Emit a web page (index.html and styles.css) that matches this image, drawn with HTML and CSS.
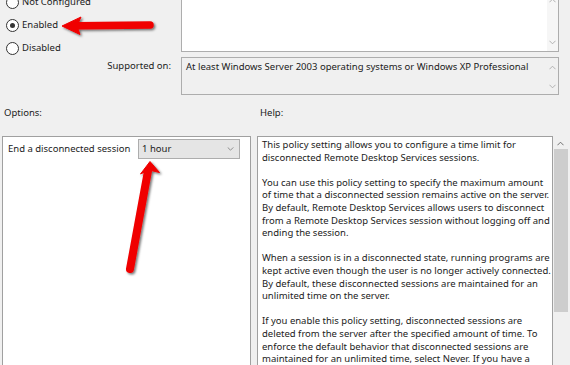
FILE: index.html
```html
<!DOCTYPE html>
<html lang="en">
<head>
    <meta charset="UTF-8">
    <title>End a disconnected session</title>
    <link rel="stylesheet" href="styles.css">
</head>
<body>
    <div class="page">
        <div class="top">
            <div class="states">
                <div class="radio"><span class="radio-dot"></span>Not Configured</div>
                <div class="radio checked"><span class="radio-dot"></span>Enabled</div>
                <div class="radio"><span class="radio-dot"></span>Disabled</div>
            </div>
            <div class="box comment">
                <div class="box-body"></div>
                <div class="box-scroll">
                    <svg class="chev" viewBox="0 0 8 5"><polyline points="0.5,4.5 4,1 7.5,4.5"/></svg>
                    <svg class="chev" viewBox="0 0 8 5"><polyline points="0.5,0.5 4,4 7.5,0.5"/></svg>
                </div>
            </div>
            <div class="field-label">Supported on:</div>
            <div class="box supported">
                <div class="box-body">At least Windows Server 2003 operating systems or Windows XP Professional</div>
                <div class="box-scroll">
                    <svg class="chev" viewBox="0 0 8 5"><polyline points="0.5,4.5 4,1 7.5,4.5"/></svg>
                    <svg class="chev" viewBox="0 0 8 5"><polyline points="0.5,0.5 4,4 7.5,0.5"/></svg>
                </div>
            </div>
        </div>

        <div class="heads">
            <div class="head">Options:</div>
            <div class="head">Help:</div>
        </div>

        <div class="panes">
            <div class="pane options">
                <div class="option-row">
                    <span class="option-label">End a disconnected session</span>
                    <div class="select">
                        <span>1 hour</span>
                        <svg class="select-chev" viewBox="0 0 8 5"><polyline points="0.5,0.5 4,4 7.5,0.5"/></svg>
                    </div>
                </div>
            </div>
            <div class="pane help">
                <p>This policy setting allows you to configure a time limit for<br>disconnected Remote Desktop Services sessions.</p>
                <p>You can use this policy setting to specify the maximum amount<br>of time that a disconnected session remains active on the server.<br>By default, Remote Desktop Services allows users to disconnect<br>from a Remote Desktop Services session without logging off and<br>ending the session.</p>
                <p>When a session is in a disconnected state, running programs are<br>kept active even though the user is no longer actively connected.<br>By default, these disconnected sessions are maintained for an<br>unlimited time on the server.</p>
                <p>If you enable this policy setting, disconnected sessions are<br>deleted from the server after the specified amount of time. To<br>enforce the default behavior that disconnected sessions are<br>maintained for an unlimited time, select Never. If you have a</p>
            </div>
            <div class="scrollbar">
                <svg class="chev dark" viewBox="0 0 8 5"><polyline points="0.5,4.5 4,1 7.5,4.5"/></svg>
                <div class="thumb"></div>
            </div>
        </div>

        <!-- red callout arrows drawn over the dialog -->
        <svg class="annotations" width="570" height="365" viewBox="0 0 570 365">
            <defs>
                <filter id="shade" x="-20%" y="-20%" width="140%" height="140%">
                    <feDropShadow dx="1.5" dy="1.5" stdDeviation="1.2" flood-color="#000" flood-opacity="0.55"/>
                </filter>
            </defs>
            <g filter="url(#shade)" fill="#f00500" stroke="#f00500">
                <line x1="150" y1="25" x2="79" y2="25.8" stroke-width="7.5" stroke-linecap="round"/>
                <polygon points="62,26 81,17 77,26 80,34.5" stroke-width="1" stroke-linejoin="round"/>
                <line x1="148" y1="171" x2="130" y2="269" stroke-width="8" stroke-linecap="round"/>
                <polygon points="150,161.5 159.5,172.5 149,170 140.5,174" stroke-width="1" stroke-linejoin="round"/>
            </g>
        </svg>
    </div>
</body>
</html>
```

FILE: styles.css
```css
html, body {
    margin: 0;
    height: 100%;
    overflow: hidden;
}

body {
    background-color: #f0f0f0;
    color: #1b1b1b;
    font-family: "Noto Sans", "Open Sans", sans-serif;
    font-size: 9.5px;
    line-height: 12.6px;
}

.page {
    position: relative;
    display: flow-root;
    height: 365px;
    overflow: hidden;
}

/* top area: state radios, comment box, supported on */

.top {
    display: grid;
    grid-template-columns: 181px 378px;
    grid-template-rows: 82px 38px;
    row-gap: 5px;
    margin-top: -30px;
}

.states {
    padding: 21px 0 0 6px;
}

.radio {
    display: flex;
    align-items: center;
    gap: 3px;
    height: 23px;
}

.radio-dot {
    width: 11px;
    height: 11px;
    border: 1px solid #333;
    border-radius: 50%;
    background-color: #fff;
    display: flex;
    align-items: center;
    justify-content: center;
}

.radio.checked .radio-dot::after {
    content: "";
    width: 5px;
    height: 5px;
    border-radius: 50%;
    background-color: #333;
}

.box {
    display: flex;
    border: 1px solid #adadad;
    box-sizing: border-box;
}

.box-body {
    flex: 1;
    padding: 3px 4px;
}

.comment {
    background-color: #fff;
}

.supported {
    background-color: #f0f0f0;
}

.box-scroll {
    width: 11px;
    display: flex;
    flex-direction: column;
    justify-content: space-between;
    align-items: center;
    padding: 7px 0 5px;
}

.comment .box-scroll {
    background-color: #f6f6f6;
    padding: 27px 0 6px;
}

.chev {
    width: 7px;
    height: 5px;
    fill: none;
    stroke: #a9a9a9;
    stroke-width: 1;
}

.chev.dark {
    stroke: #606060;
}

.field-label {
    text-align: right;
    padding: 3px 10px 0 0;
}

/* section headings */

.heads {
    display: grid;
    grid-template-columns: 256px 1fr;
    margin-top: 11px;
    height: 14px;
    line-height: 14px;
}

.head:first-child {
    padding-left: 4px;
}

.head:last-child {
    padding-left: 4px;
}

/* options / help panes */

.panes {
    display: flex;
    margin-top: 16px;
    padding-left: 2px;
    height: 260px;
}

.pane {
    box-sizing: border-box;
    border: 1px solid #a0a0a0;
    background-color: #fff;
}

.options {
    width: 249px;
    padding: 2px 5px;
}

.option-row {
    display: flex;
    align-items: center;
    height: 20px;
}

.option-label {
    width: 130px;
    flex-shrink: 0;
    white-space: nowrap;
}

.select {
    display: flex;
    align-items: center;
    justify-content: space-between;
    box-sizing: border-box;
    width: 102px;
    height: 20px;
    padding: 0 5px 0 3px;
    background-color: #e5e5e5;
    border: 1px solid #adadad;
}

.select-chev {
    width: 7px;
    height: 4px;
    fill: none;
    stroke: #7a7a7a;
    stroke-width: 1;
}

.help {
    width: 296px;
    margin-left: 6px;
    padding: 2px 4px;
    white-space: nowrap;
    overflow: hidden;
}

.help p {
    margin: 0 0 12.6px;
}

.scrollbar {
    width: 15px;
    display: flex;
    flex-direction: column;
    align-items: center;
    padding-top: 5px;
}

.thumb {
    width: 14px;
    height: 163px;
    margin-top: 3px;
    background-color: #cdcdcd;
}

.annotations {
    position: absolute;
    top: 0;
    left: 0;
    pointer-events: none;
}
```
